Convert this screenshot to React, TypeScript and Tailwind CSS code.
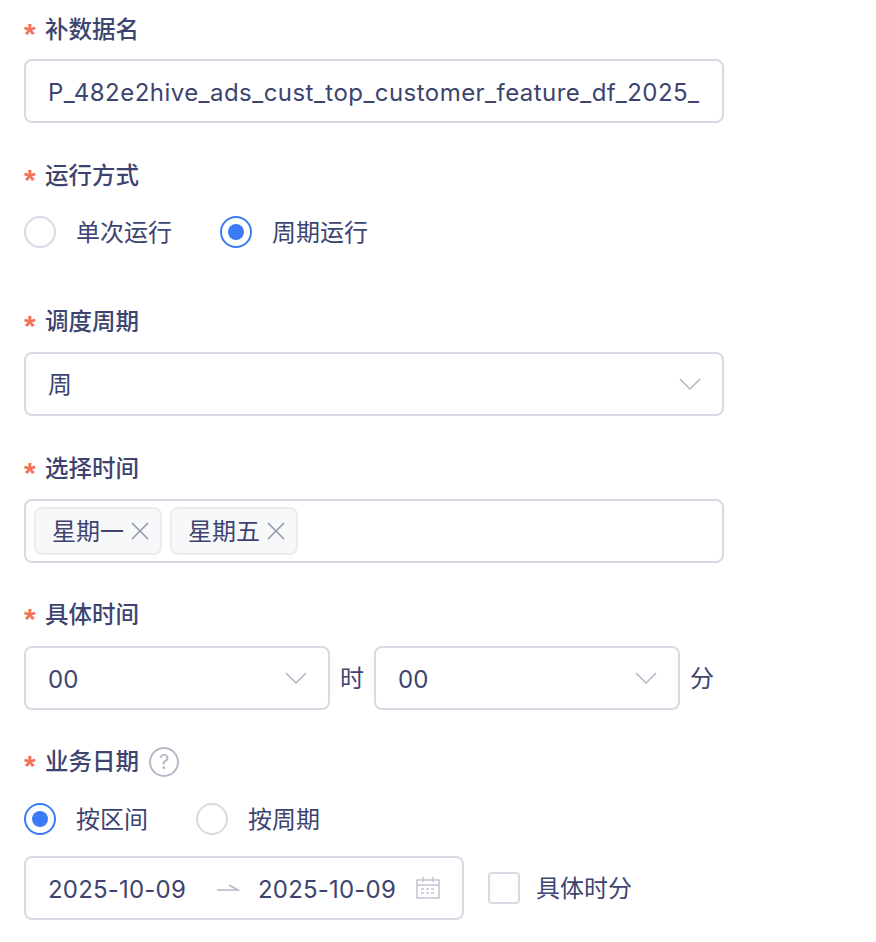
import React, { ReactNode } from 'react';

const fontStack = { fontFamily: 'Inter, "Noto Sans CJK SC", sans-serif' };

function Label({ children, extra }: { children: ReactNode; extra?: ReactNode }) {
  return (
    <div className="flex h-8 items-center">
      <span className="w-[21px] pt-[7px] font-['Liberation_Sans'] text-[30px] leading-none font-bold text-[#f0735a]">*</span>
      <span className="text-[23.5px] leading-8 font-medium text-[#3d4470]">{children}</span>
      {extra}
    </div>
  );
}

function Radio({ checked, label, className }: { checked?: boolean; label: string; className?: string }) {
  return (
    <div className={`flex items-center ${className ?? ''}`}>
      {checked ? (
        <span className="flex h-8 w-8 items-center justify-center rounded-full border-2 border-[#3b7bf6]">
          <span className="h-4 w-4 rounded-full bg-[#3b7bf6]" />
        </span>
      ) : (
        <span className="h-8 w-8 rounded-full border-2 border-[#d8dae3]" />
      )}
      <span className="ml-5 pt-[2px] text-[24px] leading-[30px] text-[#3d4470]">{label}</span>
    </div>
  );
}

function Select({ value, className, valueClass }: { value: string; className?: string; valueClass?: string }) {
  return (
    <div className={`flex h-16 items-center justify-between rounded-lg border-2 border-[#d8dae3] pr-[21px] pl-[22px] ${className ?? ''}`}>
      <span className={`text-[24px] tracking-[0.2px] text-[#3d4470] ${valueClass ?? ''}`}>{value}</span>
      <svg width="22" height="12" viewBox="0 0 22 12" fill="none" stroke="#b5b8c8" strokeWidth="1.5">
        <path d="M1 1l10 10L21 1" />
      </svg>
    </div>
  );
}

function Tag({ label }: { label: string }) {
  return (
    <div className="flex h-12 w-32 items-center rounded-lg border-2 border-[#ebecf1] bg-[#f7f8fa] pl-4">
      <span className="pt-[2px] text-[24px] text-[#3d4470]">{label}</span>
      <svg className="ml-[7px]" width="18" height="18" viewBox="0 0 18 18" fill="none" stroke="#8b8fa6" strokeWidth="1.4">
        <path d="M1 1l16 16M17 1L1 17" />
      </svg>
    </div>
  );
}

function CalendarIcon() {
  return (
    <svg width="24" height="24" viewBox="0 0 24 24" fill="none" stroke="#c2c5d3" strokeWidth="1.5">
      <rect x="1" y="4" width="22" height="18" />
      <path d="M1 9h22M7 1v5M17 1v5" />
      <path d="M5 13h14M5 17h14" strokeDasharray="3 2" />
    </svg>
  );
}

export default function App() {
  return (
    <div className="min-h-[942px] w-[876px] overflow-hidden bg-white pt-[14px] pl-6" style={fontStack}>
      <div className="flex w-[700px] flex-col">
        <Label>补数据名</Label>
        <div className="mt-[13px] flex h-16 items-center overflow-hidden rounded-lg border-2 border-[#d8dae3] pl-[22px] whitespace-nowrap">
          <span className="w-[652px] overflow-hidden pt-1 text-[24px] tracking-[0.46px] text-[#3d4470]">
            P_482e2hive_ads_cust_top_customer_feature_df_2025_
          </span>
        </div>

        <div className="mt-[37px]">
          <Label>运行方式</Label>
        </div>
        <div className="mt-[24px] flex">
          <Radio label="单次运行" />
          <Radio checked label="周期运行" className="ml-12" />
        </div>

        <div className="mt-[58px]">
          <Label>调度周期</Label>
        </div>
        <Select value="周" className="mt-[14px]" valueClass="pt-[2px]" />

        <div className="mt-[37px]">
          <Label>选择时间</Label>
        </div>
        <div className="mt-[14px] flex h-16 items-center gap-2 rounded-lg border-2 border-[#d8dae3] pl-2">
          <Tag label="星期一" />
          <Tag label="星期五" />
        </div>

        <div className="mt-[36px]">
          <Label>具体时间</Label>
        </div>
        <div className="mt-[15px] flex items-center">
          <Select value="00" className="w-[306px]" valueClass="pt-1" />
          <span className="mx-[10px] pt-[2px] text-[24px] text-[#3d4470]">时</span>
          <Select value="00" className="w-[306px]" valueClass="pt-1" />
          <span className="ml-[10px] pt-[2px] text-[24px] text-[#3d4470]">分</span>
        </div>

        <div className="mt-[36px]">
          <Label
            extra={
              <span className="ml-[10px] flex h-[30px] w-[30px] items-center justify-center rounded-full border-2 border-[#b5b8c8] text-[20px] text-[#b5b8c8]">
                ?
              </span>
            }
          >
            业务日期
          </Label>
        </div>
        <div className="mt-[25px] flex">
          <Radio checked label="按区间" />
          <Radio label="按周期" className="ml-12" />
        </div>

        <div className="mt-[21px] flex items-center">
          <div className="flex h-16 w-[440px] items-center rounded-lg border-2 border-[#d8dae3] pl-[22px]">
            <span className="w-[138px] pt-1 text-[24px] tracking-[0.2px] text-[#3d4470]">2025-10-09</span>
            <svg className="ml-[30px]" width="24" height="12" viewBox="0 0 24 12" fill="none" stroke="#b5b8c8" strokeWidth="1.5">
              <path d="M1 8h21L13 3" />
            </svg>
            <span className="ml-[18px] w-[138px] pt-1 text-[24px] tracking-[0.2px] text-[#3d4470]">2025-10-09</span>
            <span className="ml-[20px]">
              <CalendarIcon />
            </span>
          </div>
          <span className="ml-6 h-8 w-8 rounded border-2 border-[#d8dae3]" />
          <span className="ml-4 pt-[2px] text-[24px] text-[#3d4470]">具体时分</span>
        </div>
      </div>
    </div>
  );
}
